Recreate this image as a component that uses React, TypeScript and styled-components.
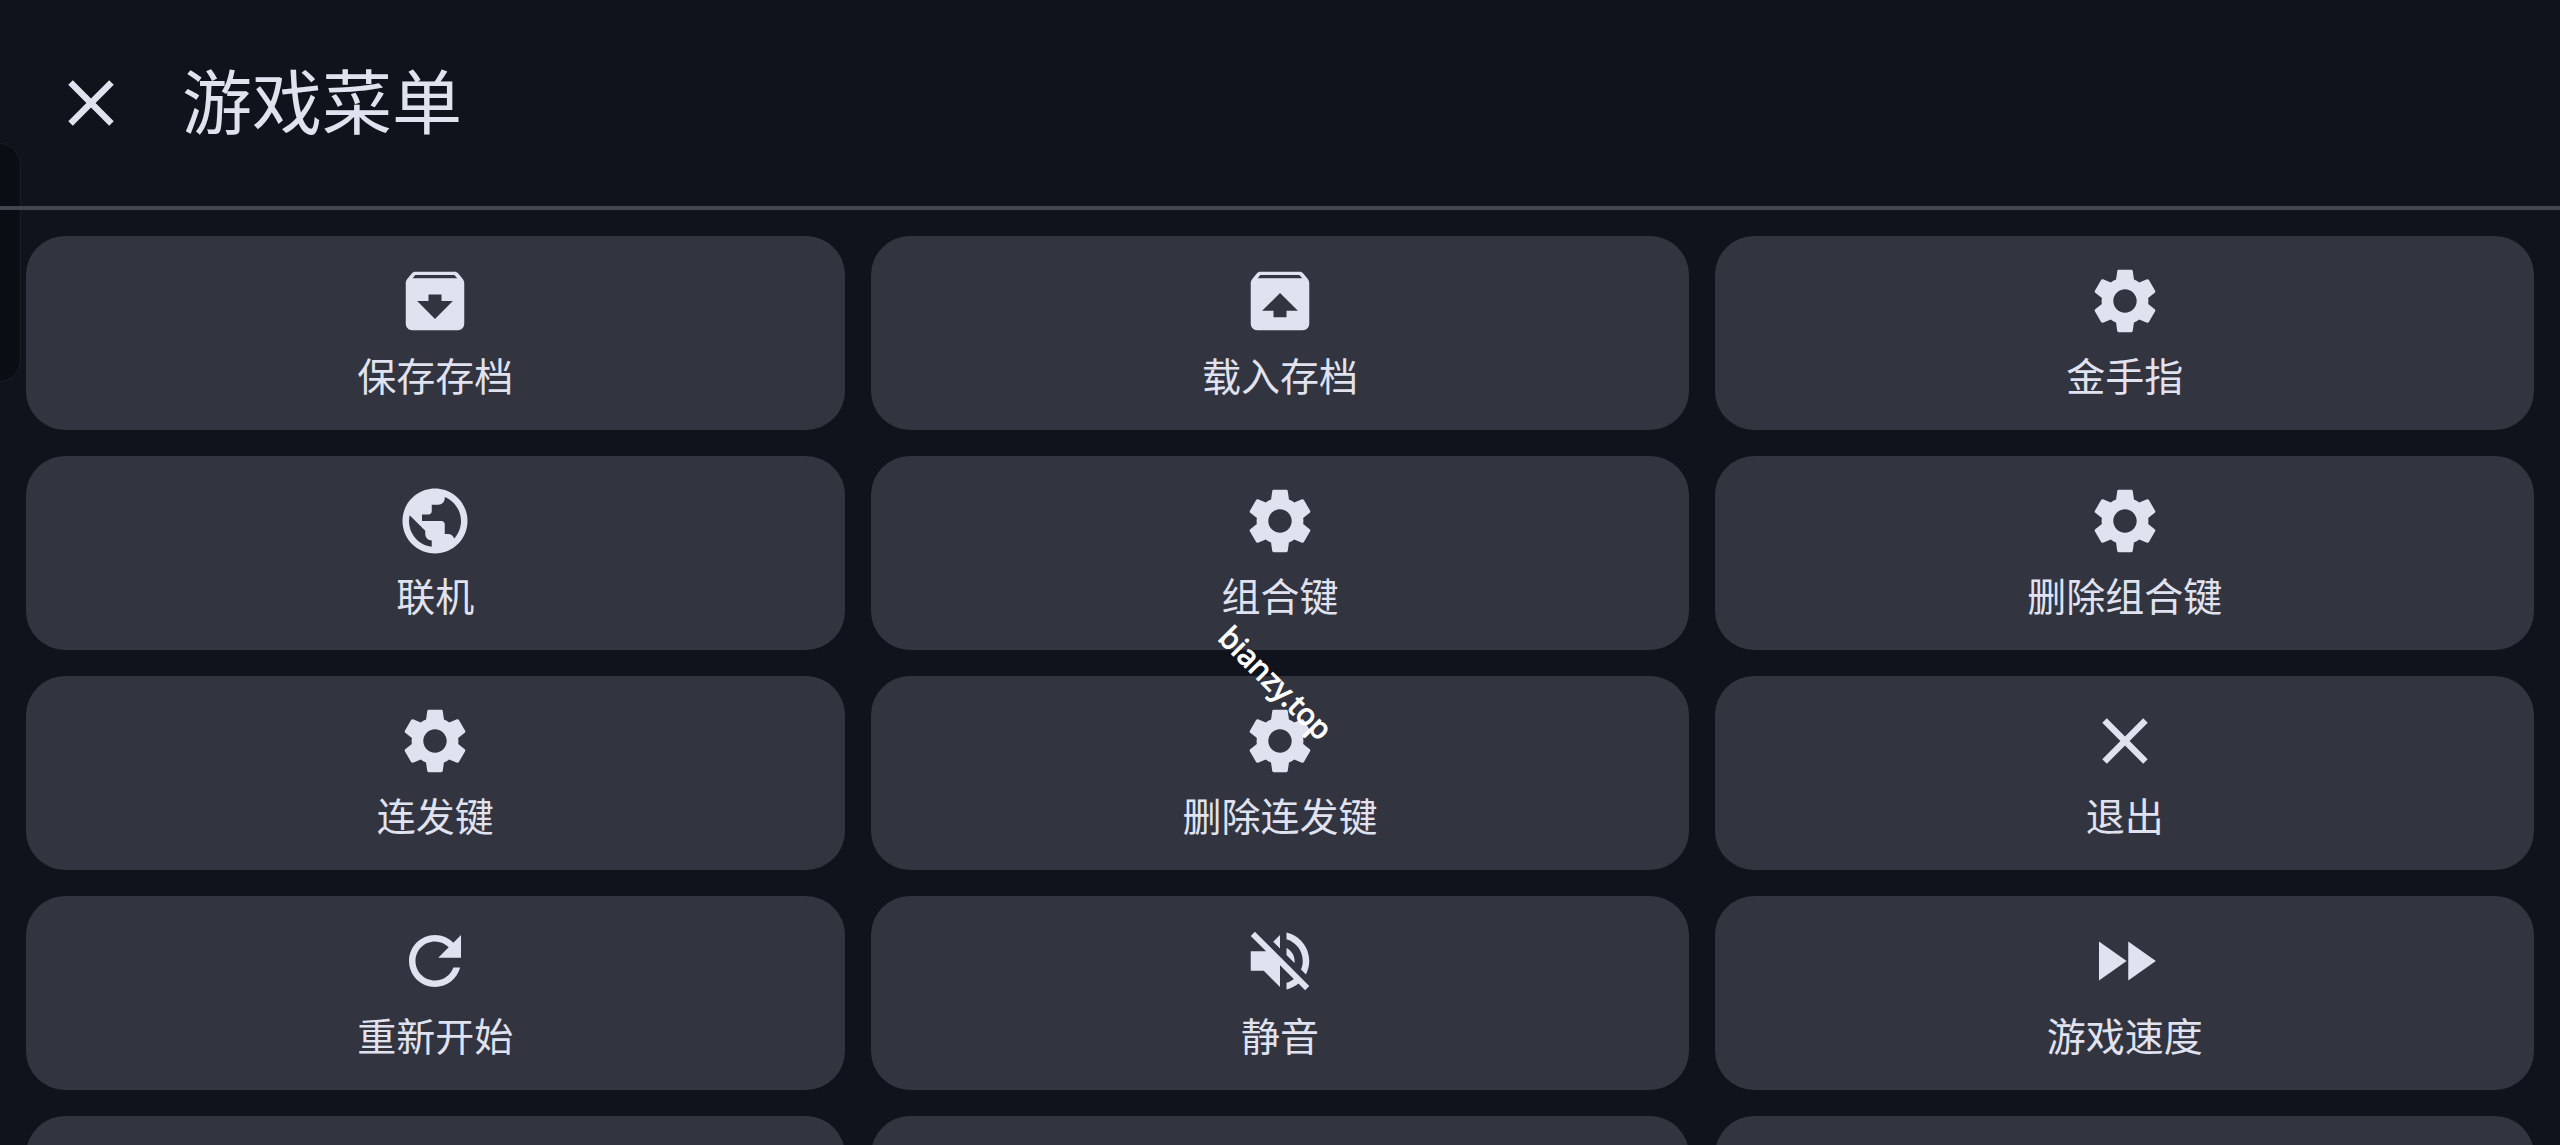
import React from "react";
import styled, { createGlobalStyle } from "styled-components";

const GlobalStyle = createGlobalStyle`
  *, *::before, *::after { box-sizing: border-box; }
  body {
    margin: 0;
    background: #10131c;
    color: #e1e2f0;
    font-family: "Noto Sans CJK SC", sans-serif;
  }
`;

const Screen = styled.div`
  position: relative;
  isolation: isolate;
  display: flex;
  flex-direction: column;
  height: 100vh;
  overflow: hidden;
`;

const Header = styled.header`
  display: flex;
  align-items: center;
  gap: 52px;
  padding: 64px 52px;
  border-bottom: 4px solid #43454f;
`;

const CloseButton = styled.button`
  display: flex;
  padding: 0;
  border: 0;
  background: none;
  color: inherit;
  cursor: pointer;
`;

const Title = styled.h1`
  margin: 0;
  padding-bottom: 8px;
  font-size: 70px;
  font-weight: 400;
  line-height: 70px;
`;

const Grid = styled.main`
  display: grid;
  grid-template-columns: repeat(3, minmax(0, 1fr));
  grid-auto-rows: min-content;
  gap: 26px;
  padding: 26px;
`;

const Card = styled.button`
  display: flex;
  flex-direction: column;
  align-items: center;
  gap: 8px;
  min-height: 194px;
  padding: 26px 26px 30px;
  border: 0;
  border-radius: 39px;
  background: #32343f;
  color: inherit;
  font-family: inherit;
  font-size: 39px;
  line-height: 52px;
  cursor: pointer;
`;

const Glyph = styled.svg`
  display: block;
  width: 78px;
  height: 78px;
  fill: currentColor;
`;

const EdgeHandle = styled.div`
  position: absolute;
  z-index: -1;
  top: 143px;
  left: -40px;
  width: 61px;
  height: 239px;
  border: 1px solid #1b1f23;
  border-radius: 22px;
  background: #0a0d14;
`;

const Watermark = styled.div`
  position: absolute;
  top: 60%;
  left: 50%;
  padding-right: 12px;
  color: #fff;
  font-family: "Noto Sans", sans-serif;
  font-size: 30px;
  font-weight: 400;
  line-height: 40px;
  -webkit-text-stroke: 1px #fff;
  pointer-events: none;
  transform: translate(-50%, -50%) rotate(45deg);
`;

const paths = {
  close:
    "M19 6.41L17.59 5 12 10.59 6.41 5 5 6.41 10.59 12 5 17.59 6.41 19 12 13.41 17.59 19 19 17.59 13.41 12z",
  archive:
    "M20.54 5.23l-1.39-1.68C18.88 3.21 18.47 3 18 3H6c-.47 0-.88.21-1.16.55L3.46 5.23C3.17 5.57 3 6.02 3 6.5V19c0 1.1.9 2 2 2h14c1.1 0 2-.9 2-2V6.5c0-.48-.17-.93-.46-1.27zM12 17.5L6.5 12H10v-2h4v2h3.5L12 17.5zM5.12 5l.81-1h12l.94 1H5.12z",
  unarchive:
    "M20.55 5.22l-1.39-1.68C18.88 3.21 18.47 3 18 3H6c-.47 0-.88.21-1.15.55L3.46 5.22C3.17 5.57 3 6.01 3 6.5V19c0 1.1.89 2 2 2h14c1.1 0 2-.9 2-2V6.5c0-.49-.17-.93-.45-1.28zM12 9.5l5.5 5.5H14v2h-4v-2H6.5L12 9.5zM5.12 5l.82-1h12l.93 1H5.12z",
  settings:
    "M19.14 12.94c.04-.3.06-.61.06-.94 0-.32-.02-.64-.07-.94l2.03-1.58c.18-.14.23-.41.12-.61l-1.92-3.32c-.12-.22-.37-.29-.59-.22l-2.39.96c-.5-.38-1.03-.7-1.62-.94l-.36-2.54c-.04-.24-.24-.41-.48-.41h-3.84c-.24 0-.43.17-.47.41l-.36 2.54c-.59.24-1.13.57-1.62.94l-2.39-.96c-.22-.08-.47 0-.59.22L2.74 8.87c-.12.21-.08.47.12.61l2.03 1.58c-.05.3-.09.63-.09.94s.02.64.07.94l-2.03 1.58c-.18.14-.23.41-.12.61l1.92 3.32c.12.22.37.29.59.22l2.39-.96c.5.38 1.03.7 1.62.94l.36 2.54c.05.24.24.41.48.41h3.84c.24 0 .44-.17.47-.41l.36-2.54c.59-.24 1.13-.56 1.62-.94l2.39.96c.22.08.47 0 .59-.22l1.92-3.32c.12-.22.07-.47-.12-.61l-2.01-1.58zM12 15.6c-1.98 0-3.6-1.62-3.6-3.6s1.62-3.6 3.6-3.6 3.6 1.62 3.6 3.6-1.62 3.6-3.6 3.6z",
  globe:
    "M12 2C6.48 2 2 6.48 2 12s4.48 10 10 10 10-4.48 10-10S17.52 2 12 2zm-1 17.93c-3.95-.49-7-3.85-7-7.93 0-.62.08-1.21.21-1.79L9 15v1c0 1.1.9 2 2 2v1.93zm6.9-2.54c-.26-.81-1-1.39-1.9-1.39h-1v-3c0-.55-.45-1-1-1H8v-2h2c.55 0 1-.45 1-1V7h2c1.1 0 2-.9 2-2v-.41c2.93 1.19 5 4.06 5 7.41 0 2.08-.8 3.97-2.1 5.39z",
  restart:
    "M17.65 6.35C16.2 4.9 14.21 4 12 4c-4.42 0-7.99 3.58-7.99 8s3.57 8 7.99 8c3.73 0 6.84-2.55 7.73-6h-2.08c-.82 2.33-3.04 4-5.65 4-3.31 0-6-2.69-6-6s2.69-6 6-6c1.66 0 3.14.69 4.22 1.78L13 11h7V4l-2.35 2.35z",
  mute:
    "M16.5 12c0-1.77-1.02-3.29-2.5-4.03v2.21l2.45 2.45c.03-.2.05-.41.05-.63zm2.5 0c0 .94-.2 1.82-.54 2.64l1.51 1.51C20.63 14.91 21 13.5 21 12c0-4.28-2.99-7.86-7-8.77v2.06c2.89.86 5 3.54 5 6.71zM4.27 3L3 4.27 7.73 9H3v6h4l5 5v-6.73l4.25 4.25c-.67.52-1.42.93-2.25 1.18v2.06c1.38-.31 2.63-.95 3.69-1.81L19.73 21 21 19.73l-9-9L4.27 3zM12 4L9.91 6.09 12 8.18V4z",
  forward: "M4 18l8.500-6L4 6v12zm9-12v12l8.500-6L13 6z",
};

type IconName = keyof typeof paths;

const Icon = ({ name }: { name: IconName }) => (
  <Glyph viewBox="0 0 24 24" aria-hidden="true">
    <path d={paths[name]} />
  </Glyph>
);

const actions: { icon: IconName; label: string }[] = [
  { icon: "archive", label: "保存存档" },
  { icon: "unarchive", label: "载入存档" },
  { icon: "settings", label: "金手指" },
  { icon: "globe", label: "联机" },
  { icon: "settings", label: "组合键" },
  { icon: "settings", label: "删除组合键" },
  { icon: "settings", label: "连发键" },
  { icon: "settings", label: "删除连发键" },
  { icon: "close", label: "退出" },
  { icon: "restart", label: "重新开始" },
  { icon: "mute", label: "静音" },
  { icon: "forward", label: "游戏速度" },
];

export default function App() {
  return (
    <Screen>
      <GlobalStyle />
      <Header>
        <CloseButton type="button">
          <Icon name="close" />
        </CloseButton>
        <Title>游戏菜单</Title>
      </Header>
      <Grid>
        {actions.map(({ icon, label }) => (
          <Card key={label} type="button">
            <Icon name={icon} />
            <span>{label}</span>
          </Card>
        ))}
        {[0, 1, 2].map((slot) => (
          <Card key={slot} as="div" />
        ))}
      </Grid>
      <EdgeHandle />
      <Watermark>bianzy.top</Watermark>
    </Screen>
  );
}
